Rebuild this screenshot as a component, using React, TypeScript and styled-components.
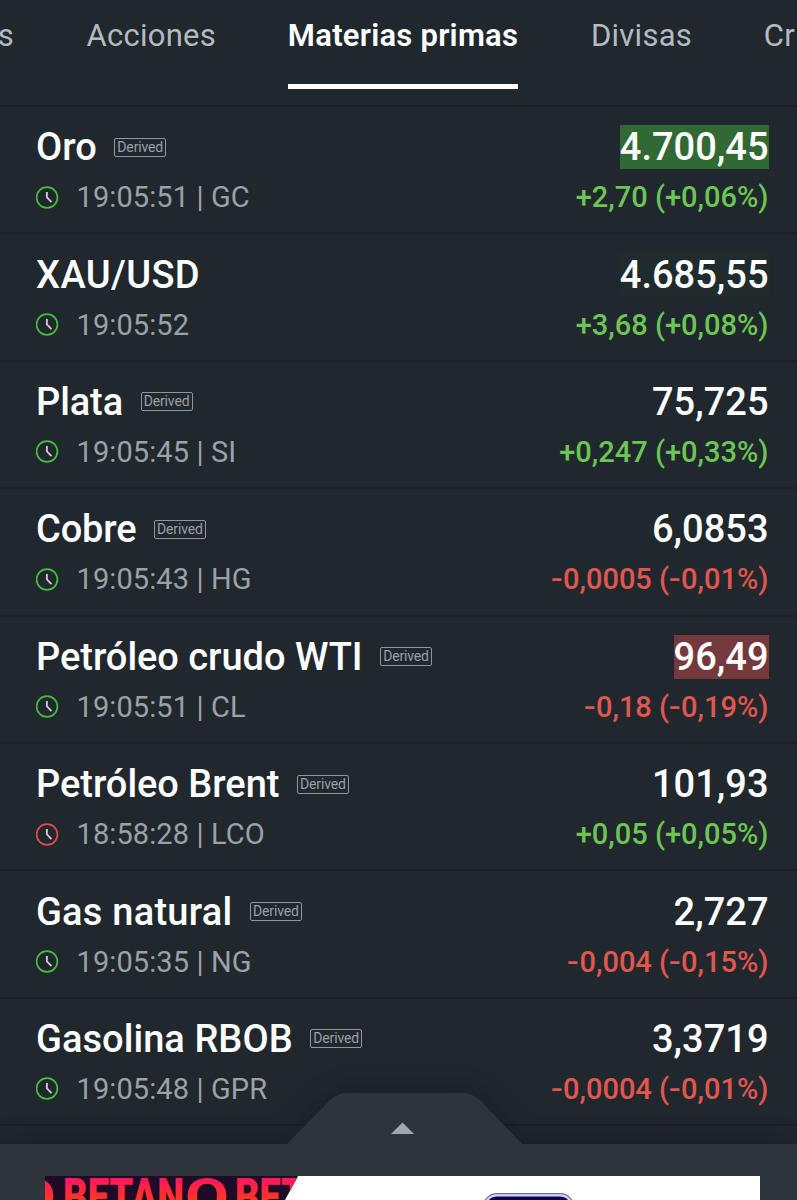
import React from 'react';
import styled, { createGlobalStyle } from 'styled-components';

const Global = createGlobalStyle`
  * { box-sizing: border-box; }
  html, body { margin: 0; background: #20272d; }
  body { font-family: Roboto, "Liberation Sans", sans-serif; overflow: hidden; }
`;

const Screen = styled.main`
  width: 797px;
  height: 1200px;
  overflow: hidden;
  display: flex;
  flex-direction: column;
  background: #20272d;
  position: relative;
`;

const Tabs = styled.nav`
  flex: none;
  height: 105px;
  display: flex;
  gap: 72px;
  white-space: nowrap;
`;

const Tab = styled.div<{ $active?: boolean; $width: number }>`
  flex: none;
  width: ${(p) => p.$width}px;
  height: 89px;
  padding-top: 16px;
  display: flex;
  justify-content: ${(p) => (p.$active ? 'center' : 'flex-end')};
  font-size: 31px;
  line-height: 40px;
  letter-spacing: 0.25px;
  font-weight: ${(p) => (p.$active ? 600 : 400)};
  color: ${(p) => (p.$active ? '#ffffff' : '#b6bac0')};
  border-bottom: ${(p) => (p.$active ? '5px solid #ffffff' : 'none')};
`;

const List = styled.section`
  flex: none;
  display: flex;
  flex-direction: column;
`;

const Row = styled.article`
  height: 127.4px;
  border-top: 2px solid #1a2026;
  padding: 18.2px 28.5px 0 36px;
  display: flex;
  justify-content: space-between;
`;

const Side = styled.div<{ $end?: boolean }>`
  display: flex;
  flex-direction: column;
  align-items: ${(p) => (p.$end ? 'flex-end' : 'flex-start')};
`;

const NameLine = styled.div`
  height: 44px;
  display: flex;
  align-items: center;
  gap: 18px;
`;

const Name = styled.h2<{ $tracking: number }>`
  margin: 0;
  font-size: 38px;
  line-height: 44px;
  font-weight: 500;
  letter-spacing: ${(p) => p.$tracking}px;
  color: #ffffff;
`;

const Badge = styled.span`
  width: 52px;
  height: 19px;
  margin-left: -0.5px;
  border: 1px solid #8f969f;
  border-radius: 2px;
  font-size: 14px;
  line-height: 17px;
  letter-spacing: -0.15px;
  text-align: center;
  color: #989fa8;
`;

const Meta = styled.div`
  margin-top: 8px;
  height: 40px;
  display: flex;
  align-items: center;
  gap: 17.5px;
  font-size: 29px;
  line-height: 40px;
  letter-spacing: 0.1px;
  color: #9aa1aa;
`;

const Price = styled.div<{ $flash?: string }>`
  height: 44px;
  font-size: 38px;
  line-height: 44px;
  font-weight: 500;
  color: #ffffff;
  background: ${(p) => p.$flash || 'transparent'};
`;

const Change = styled.div<{ $up: boolean }>`
  margin-top: 8px;
  font-size: 29px;
  line-height: 40px;
  font-weight: 500;
  white-space: pre;
  color: ${(p) => (p.$up ? '#6cc554' : '#e1564f')};
`;

const Minus = styled.span`
  display: inline-block;
  margin-right: 2.1px;
  transform: scaleX(1.22);
  transform-origin: left center;
`;

const ClockIcon = styled.svg`
  width: 23px;
  height: 23px;
  display: block;
`;

const Drawer = styled.footer`
  position: absolute;
  left: 0;
  right: 0;
  bottom: 0;
  height: 107px;
`;

const DrawerShape = styled.svg`
  display: block;
  width: 797px;
  height: 107px;
  overflow: visible;
`;

const Handle = styled.path`
  filter: drop-shadow(0 -3px 12px rgba(0, 0, 0, 0.2));
`;

function Clock({ open }: { open: boolean }) {
  return (
    <ClockIcon viewBox="0 0 23 23" fill="none">
      <circle cx="11" cy="11.5" r="10.4" stroke={open ? '#45bd3d' : '#e04a4f'} strokeWidth="1.7" />
      <path d="M10.9 6V11.4L15.5 16.2" stroke="#c9c9cf" strokeWidth="1.9" />
    </ClockIcon>
  );
}

type Quote = {
  name: string;
  tracking?: number;
  derived: boolean;
  meta: string;
  open: boolean;
  price: string;
  change: string;
  flash?: string;
};

const quotes: Quote[] = [
  { name: 'Oro', derived: true, meta: '19:05:51 | GC', open: true, price: '4.700,45', change: '+2,70 (+0,06%)', flash: '#316934' },
  { name: 'XAU/USD', tracking: 0.4, derived: false, meta: '19:05:52', open: true, price: '4.685,55', change: '+3,68 (+0,08%)', flash: '#202b2d' },
  { name: 'Plata', tracking: -0.1, derived: true, meta: '19:05:45 | SI', open: true, price: '75,725', change: '+0,247 (+0,33%)' },
  { name: 'Cobre', tracking: -0.15, derived: true, meta: '19:05:43 | HG', open: true, price: '6,0853', change: '-0,0005 (-0,01%)' },
  { name: 'Petróleo crudo WTI', tracking: -0.03, derived: true, meta: '19:05:51 | CL', open: true, price: '96,49', change: '-0,18 (-0,19%)', flash: '#73393d' },
  { name: 'Petróleo Brent', tracking: -0.03, derived: true, meta: '18:58:28 | LCO', open: false, price: '101,93', change: '+0,05 (+0,05%)' },
  { name: 'Gas natural', tracking: 0.24, derived: true, meta: '19:05:35 | NG', open: true, price: '2,727', change: '-0,004 (-0,15%)' },
  { name: 'Gasolina RBOB', tracking: 0.05, derived: true, meta: '19:05:48 | GPR', open: true, price: '3,3719', change: '-0,0004 (-0,01%)' },
];

function ChangeText({ value }: { value: string }) {
  return (
    <Change $up={value.startsWith('+')}>
      {value.split(/(-)/).map((part, i) => (part === '-' ? <Minus key={i}>-</Minus> : part))}
    </Change>
  );
}

export default function App() {
  return (
    <Screen>
      <Global />
      <Tabs>
        <Tab $width={14}>s</Tab>
        <Tab $width={130}>Acciones</Tab>
        <Tab $width={230} $active>Materias primas</Tab>
        <Tab $width={102}>Divisas</Tab>
        <Tab $width={31}>Cr</Tab>
      </Tabs>
      <List>
        {quotes.map((q) => (
          <Row key={q.name}>
            <Side>
              <NameLine>
                <Name $tracking={q.tracking ?? 0}>{q.name}</Name>
                {q.derived && <Badge>Derived</Badge>}
              </NameLine>
              <Meta>
                <Clock open={q.open} />
                {q.meta}
              </Meta>
            </Side>
            <Side $end>
              <Price $flash={q.flash}>{q.price}</Price>
              <ChangeText value={q.change} />
            </Side>
          </Row>
        ))}
        <Row />
      </List>
      <Drawer>
        <DrawerShape viewBox="0 0 797 107">
          <defs>
            <linearGradient id="ink" gradientUnits="userSpaceOnUse" x1="0" y1="84" x2="0" y2="107">
              <stop offset="0" stopColor="#ff1467" />
              <stop offset="0.6" stopColor="#ff2a38" />
              <stop offset="1" stopColor="#ff3622" />
            </linearGradient>
            <clipPath id="stripe">
              <path d="M45 83H298L285 107H45Z" />
            </clipPath>
            <clipPath id="banner">
              <path d="M45 83H760V107H45Z" />
            </clipPath>
          </defs>
          <Handle d="M0 51H287L328 9Q337 0 347 0H463Q473 0 482 9L522 51H797V107H0Z" fill="#2d353c" />
          <path d="M391 41L402.5 29.5L414 41Z" fill="#a0a7af" />
          <path d="M45 83H760V107H45Z" fill="#ffffff" />
          <g clipPath="url(#stripe)">
            <path d="M45 83H300V107H45Z" fill="#1e0b26" />
            <g fill="url(#ink)" fontFamily="Roboto, sans-serif" fontWeight="900" fontSize="50">
              <text x="12" y="121" fontWeight="700" textLength="44" lengthAdjust="spacingAndGlyphs">O</text>
              <text x="63" y="121" textLength="121" lengthAdjust="spacingAndGlyphs">BETAN</text>
              <text x="185" y="121" fontWeight="700" textLength="44" lengthAdjust="spacingAndGlyphs">O</text>
              <text x="235" y="121" textLength="70" lengthAdjust="spacingAndGlyphs">BET</text>
            </g>
          </g>
          <g clipPath="url(#banner)">
            <rect x="483" y="100.7" width="91" height="40" rx="14" fill="#dcd9ee" stroke="#6f6aa0" strokeWidth="1.2" />
            <rect x="486" y="103.5" width="85" height="40" rx="11" fill="#07024f" />
          </g>
        </DrawerShape>
      </Drawer>
    </Screen>
  );
}
